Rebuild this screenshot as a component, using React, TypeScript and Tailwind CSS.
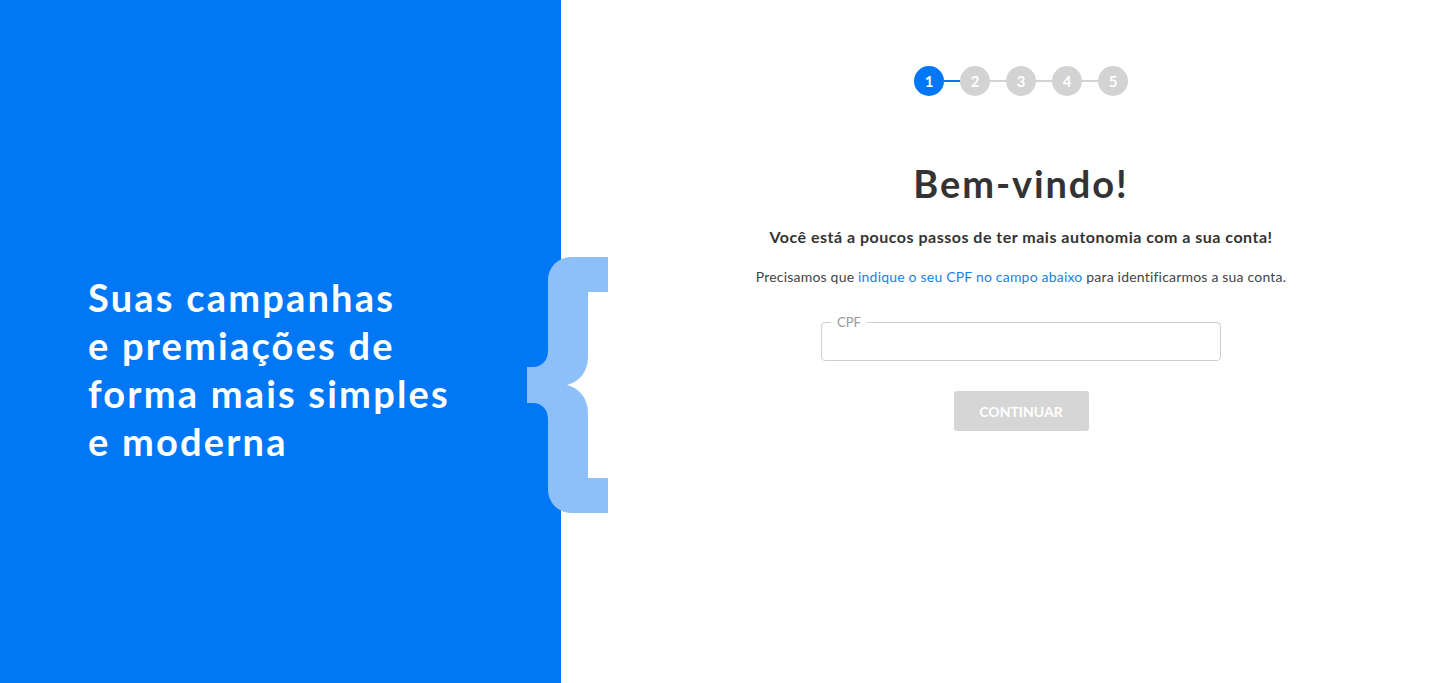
import { useState } from "react";

const STEPS = [1, 2, 3, 4, 5];

function Brace() {
  return (
    <svg width="81" height="256" viewBox="0 0 81 256" className="absolute left-[527px] top-[257px]">
      <path
        fill="#8dc0f8"
        d="M81 0 V35 H61 V100 C61 115 52 125 40 128 C52 131 61 141 61 156 V221 H81 V256 H45 C31 256 21 246 21 232 V162 C21 152 14 146 6 146 H0 V110 H6 C14 110 21 104 21 94 V24 C21 10 31 0 45 0 Z"
      />
    </svg>
  );
}

function Stepper({ current }: { current: number }) {
  return (
    <div className="flex items-center">
      {STEPS.map((n, i) => (
        <div key={n} className="flex items-center">
          {i > 0 && <div className={`h-[2px] w-4 ${i === current ? "bg-[#0077f5]" : "bg-[#d3d3d3]"}`} />}
          <div
            className={`flex h-[30px] w-[30px] items-center justify-center rounded-full text-[15px] font-bold text-white ${
              n === current ? "bg-[#0077f5]" : "bg-[#d3d3d3]"
            }`}
          >
            {n}
          </div>
        </div>
      ))}
    </div>
  );
}

export default function App() {
  const [cpf, setCpf] = useState("");

  return (
    <div className="relative flex h-[683px] w-full overflow-hidden bg-white font-['Lato',sans-serif]">
      <div className="flex w-[561px] shrink-0 items-center bg-[#0077f5] pl-[88px]">
        <h2 className="pt-[54px] text-[38px] font-bold leading-[48px] tracking-[2.2px] text-white">
          Suas campanhas
          <br />e premiações de
          <br />
          forma mais simples
          <br />e moderna
        </h2>
      </div>

      <Brace />

      <div className="flex flex-1 flex-col items-center pl-[49px] pt-[66px]">
        <Stepper current={1} />

        <h1 className="mt-[64px] text-[38px] font-bold leading-[46px] tracking-[1.9px] text-[#333]">Bem-vindo!</h1>

        <p className="mt-[19px] text-[16px] font-bold tracking-[0.5px] text-[#333]">
          Você está a poucos passos de ter mais autonomia com a sua conta!
        </p>

        <p className="mt-[17px] text-[14px] tracking-[0.2px] text-[#444]">
          Precisamos que <span className="text-[#1a7fe8]">indique o seu CPF no campo abaixo</span> para
          identificarmos a sua conta.
        </p>

        <fieldset className="mt-[29px] h-[45px] w-[400px] rounded-[4px] border border-[#cfcfcf] px-[9px]">
          <legend className="px-[6px] text-[13px] leading-[12px] text-[#999]">CPF</legend>
          <input
            value={cpf}
            onChange={(e) => setCpf(e.target.value)}
            className="h-[30px] w-full bg-transparent px-[6px] text-[14px] text-[#333] outline-none"
          />
        </fieldset>

        <button
          disabled={!cpf}
          className="mt-[30px] h-[40px] w-[135px] rounded-[3px] bg-[#d6d6d6] text-[14px] font-bold text-white"
        >
          CONTINUAR
        </button>
      </div>
    </div>
  );
}
